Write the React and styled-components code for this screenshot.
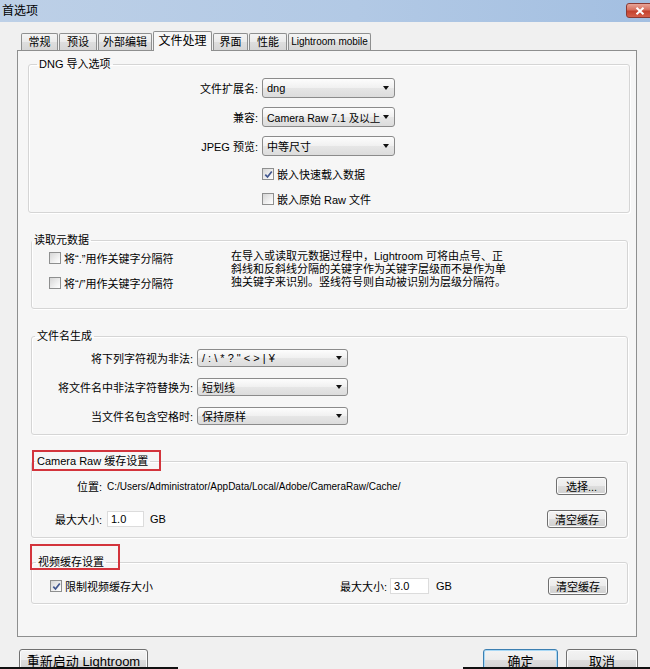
import styled, { createGlobalStyle } from 'styled-components';

const GlobalStyle = createGlobalStyle`
  html, body {
    margin: 0;
    padding: 0;
    background: #f0f0f0;
  }
  body {
    font-family: "Liberation Sans", "Noto Sans CJK SC", sans-serif;
    font-size: 11px;
    color: #000;
  }
  * {
    box-sizing: border-box;
  }
`;

const Window = styled.div`
  width: 650px;
  height: 669px;
  overflow: hidden;
  background: #f0f0f0;
  display: flex;
  flex-direction: column;
`;

const TitleBar = styled.div`
  flex: none;
  height: 22px;
  display: flex;
  align-items: flex-start;
  justify-content: space-between;
  padding-left: 2px;
  background: linear-gradient(to right, #bdd0e7 0%, #b2c9e5 55%, #a3bfe1 100%);
`;

const Title = styled.span`
  font-size: 12px;
  line-height: 22px;
`;

const CloseButton = styled.div`
  margin-top: 3px;
  margin-right: -4px;
  width: 28px;
  height: 15px;
  border: 1px solid #8a3a33;
  border-radius: 3px;
  background: linear-gradient(#e8a497 0%, #d6705f 45%, #c3412d 55%, #d45f4a 100%);
  display: flex;
  align-items: center;
  justify-content: center;
`;

const Body = styled.div`
  padding: 9px 13px 0 17px;
`;

const TabRow = styled.div`
  position: relative;
  z-index: 1;
  height: 20px;
  margin-bottom: -1px;
  padding-left: 4px;
  display: flex;
  align-items: flex-start;
  gap: 1px;
`;

const Tab = styled.div`
  width: ${p => p.$w}px;
  height: ${p => (p.$active ? 20 : 17)}px;
  margin-top: ${p => (p.$active ? 0 : 2)}px;
  border: 1px solid #8e8f8f;
  border-bottom: none;
  border-radius: 2px 2px 0 0;
  background: ${p =>
    p.$active ? '#f6f6f6' : 'linear-gradient(#f4f4f4 0%, #eaeaea 50%, #dedede 51%, #d6d6d6 100%)'};
  font-size: ${p => (p.$active ? 12 : p.$small ? 10 : 11)}px;
  line-height: ${p => (p.$active ? 18 : 16)}px;
  text-align: center;
  white-space: nowrap;
  overflow: hidden;
`;

const Panel = styled.div`
  height: 587px;
  border: 1px solid #8e8f8f;
  background: #f6f6f6;
  display: flex;
  flex-direction: column;
`;

const Group = styled.fieldset`
  min-width: 0;
  margin: ${p => p.$top}px ${p => p.$right}px 0 ${p => p.$left}px;
  padding: ${p => p.$pad};
  border: 1px solid #d5d5d5;
  border-radius: 3px;
  box-shadow: inset 1px 1px 0 #ffffff, 1px 1px 0 #ffffff;
`;

const Legend = styled.legend`
  position: relative;
  margin-left: ${p => p.$indent}px;
  padding: 0 2px;
  font-size: 11px;
  line-height: 14px;

  ${p =>
    p.$mark &&
    `
    &::after {
      content: "";
      position: absolute;
      top: ${p.$mark[0]}px;
      right: ${p.$mark[1]}px;
      bottom: ${p.$mark[2]}px;
      left: ${p.$mark[3]}px;
      border: 2px solid #d3343c;
    }
  `}
`;

const FormGrid = styled.div`
  display: grid;
  grid-template-columns: ${p => p.$cols};
  column-gap: 4px;
  row-gap: ${p => p.$gap}px;
  align-items: center;
`;

const FieldLabel = styled.span`
  text-align: right;
  white-space: nowrap;
`;

const Combo = styled.div`
  height: ${p => p.$h}px;
  display: flex;
  align-items: center;
  justify-content: space-between;
  gap: 3px;
  padding: 0 5px 0 4px;
  border: 1px solid #8b8b8b;
  border-radius: 3px;
  background: linear-gradient(#fdfdfd 0%, #f0f0f0 50%, #e6e6e6 51%, #dcdcdc 100%);
  white-space: nowrap;
  overflow: hidden;
  font-size: ${p => (p.$tight ? 10.5 : 11)}px;
`;

const Arrow = styled.span`
  flex: none;
  width: 0;
  height: 0;
  border-left: 3.5px solid transparent;
  border-right: 3.5px solid transparent;
  border-top: 4px solid #111;
`;

const CheckLabel = styled.label`
  display: flex;
  align-items: center;
  gap: 3px;
  height: 16px;
  white-space: nowrap;
  margin-top: ${p => p.$mt || 0}px;
`;

const CheckBox = styled.span`
  flex: none;
  width: 12px;
  height: 12px;
  border: 1px solid #8e8f8f;
  background: linear-gradient(135deg, #d6d6d6 0%, #f4f4f4 70%, #ffffff 100%);
  display: flex;
  align-items: center;
  justify-content: center;
`;

const MetaRow = styled.div`
  display: flex;
  padding-left: 17px;
`;

const CheckColumn = styled.div`
  width: 182px;
  display: flex;
  flex-direction: column;
  gap: 9px;
`;

const Note = styled.p`
  margin: 0;
  line-height: 13px;
  white-space: nowrap;
`;

const CacheGrid = styled.div`
  display: grid;
  grid-template-columns: 70px 1fr auto;
  column-gap: 5px;
  row-gap: 15px;
  align-items: center;
  padding-right: 20px;
`;

const Path = styled.span`
  font-size: 10px;
  white-space: nowrap;
`;

const SizeGroup = styled.div`
  display: flex;
  align-items: center;
  gap: ${p => p.$gap ?? 6}px;
`;

const TextBox = styled.div`
  width: ${p => p.$w}px;
  height: 16px;
  padding: 0 3px;
  background: #ffffff;
  border: 1px solid #dcdcdc;
  line-height: 14px;
`;

const Button = styled.div`
  width: ${p => p.$w}px;
  height: ${p => p.$h || 18}px;
  flex: none;
  display: flex;
  align-items: center;
  justify-content: center;
  border: 1px solid ${p => (p.$primary ? '#3c7fb1' : '#707070')};
  border-radius: 3px;
  background: linear-gradient(#f3f3f3 0%, #ececec 50%, #dddddd 51%, #d0d0d0 100%);
  box-shadow: inset 0 0 0 1px ${p => (p.$primary ? '#a8d8f5' : '#fbfbfb')};
  font-size: ${p => p.$size || 11}px;
  white-space: nowrap;
  justify-self: end;
`;

const VideoRow = styled.div`
  display: flex;
  align-items: center;
  padding: 0 19px 0 18px;
`;

const VideoCheck = styled.div`
  width: 290px;
`;

const Unit = styled.span`
  margin-left: 4px;
`;

const Footer = styled.div`
  flex: none;
  height: 18px;
  margin-top: 12px;
  overflow: hidden;
  display: flex;
  align-items: flex-start;
  padding: 0 12px 0 19px;
`;

const PushRight = styled.div`
  margin-left: auto;
  display: flex;
  gap: 8px;
`;

const BottomEdge = styled.div`
  flex: none;
  height: 2px;
  background: linear-gradient(to right, #111 0, #111 178px, transparent 178px, transparent 463px, #111 463px);
`;

const tabs = [
  { label: '常规', w: 37 },
  { label: '预设', w: 38 },
  { label: '外部编辑', w: 54 },
  { label: '文件处理', w: 59, active: true },
  { label: '界面', w: 35 },
  { label: '性能', w: 38 },
  { label: 'Lightroom mobile', w: 83, small: true },
];

function Check({ checked, mt, children }) {
  return (
    <CheckLabel $mt={mt}>
      <CheckBox>
        {checked && (
          <svg width="9" height="9" viewBox="0 0 9 9">
            <path d="M1.3 4.6 L3.5 7 L7.8 1.4" fill="none" stroke="#41578f" strokeWidth="1.7" />
          </svg>
        )}
      </CheckBox>
      {children}
    </CheckLabel>
  );
}

function Select({ value, h, tight }) {
  return (
    <Combo $h={h} $tight={tight}>
      <span>{value}</span>
      <Arrow />
    </Combo>
  );
}

export default function App() {
  return (
    <Window>
      <GlobalStyle />
      <TitleBar>
        <Title>首选项</Title>
        <CloseButton>
          <svg width="10" height="8" viewBox="0 0 10 8">
            <path d="M1.5 0.8 L8.5 7.2 M8.5 0.8 L1.5 7.2" stroke="#fff" strokeWidth="2" />
          </svg>
        </CloseButton>
      </TitleBar>

      <Body>
        <TabRow>
          {tabs.map(t => (
            <Tab key={t.label} $w={t.w} $active={t.active} $small={t.small}>
              {t.label}
            </Tab>
          ))}
        </TabRow>

        <Panel>
          <Group $top={6} $left={10} $right={6} $pad="7px 0 5px 0">
            <Legend $indent={8}>DNG 导入选项</Legend>
            <FormGrid $cols="229px 133px" $gap={9}>
              <FieldLabel>文件扩展名:</FieldLabel>
              <Select value="dng" h={20} />
              <FieldLabel>兼容:</FieldLabel>
              <Select value="Camera Raw 7.1 及以上" h={20} tight />
              <FieldLabel>JPEG 预览:</FieldLabel>
              <Select value="中等尺寸" h={20} />
              <span />
              <Check checked mt={1}>嵌入快速载入数据</Check>
              <span />
              <Check>嵌入原始 Raw 文件</Check>
            </FormGrid>
          </Group>

          <Group $top={20} $left={13} $right={8} $pad="3px 0 17px 0">
            <Legend $indent={0}>读取元数据</Legend>
            <MetaRow>
              <CheckColumn>
                <Check>将“.”用作关键字分隔符</Check>
                <Check>将“/”用作关键字分隔符</Check>
              </CheckColumn>
              <Note>
                在导入或读取元数据过程中，Lightroom 可将由点号、正
                <br />
                斜线和反斜线分隔的关键字作为关键字层级而不是作为单
                <br />
                独关键字来识别。竖线符号则自动被识别为层级分隔符。
              </Note>
            </MetaRow>
          </Group>

          <Group $top={20} $left={13} $right={8} $pad="6px 0 9px 0">
            <Legend $indent={3}>文件名生成</Legend>
            <FormGrid $cols="161px 151px" $gap={11}>
              <FieldLabel>将下列字符视为非法:</FieldLabel>
              <Select value={'/ : \\ * ? " < > | ¥'} h={18} />
              <FieldLabel>将文件名中非法字符替换为:</FieldLabel>
              <Select value="短划线" h={18} />
              <FieldLabel>当文件名包含空格时:</FieldLabel>
              <Select value="保持原样" h={18} />
            </FormGrid>
          </Group>

          <Group $top={19} $left={13} $right={8} $pad="9px 0 9px 0">
            <Legend $indent={3} $mark={[-4, -11, -3, -3]}>Camera Raw 缓存设置</Legend>
            <CacheGrid>
              <FieldLabel>位置:</FieldLabel>
              <Path>C:/Users/Administrator/AppData/Local/Adobe/CameraRaw/Cache/</Path>
              <Button $w={51}>选择...</Button>
              <FieldLabel>最大大小:</FieldLabel>
              <SizeGroup>
                <TextBox $w={37}>1.0</TextBox>
                GB
              </SizeGroup>
              <Button $w={60}>清空缓存</Button>
            </CacheGrid>
          </Group>

          <Group $top={17} $left={13} $right={8} $pad="8px 0 8px 0">
            <Legend $indent={4} $mark={[-11, -14, -1, -6]}>视频缓存设置</Legend>
            <VideoRow>
              <VideoCheck>
                <Check checked>限制视频缓存大小</Check>
              </VideoCheck>
              <SizeGroup $gap={3}>
                最大大小:
                <TextBox $w={39}>3.0</TextBox>
                <Unit>GB</Unit>
              </SizeGroup>
              <PushRight>
                <Button $w={60}>清空缓存</Button>
              </PushRight>
            </VideoRow>
          </Group>
        </Panel>
      </Body>

      <Footer>
        <Button $w={129} $h={22} $size={13}>重新启动 Lightroom</Button>
        <PushRight>
          <Button $w={75} $h={22} $size={13} $primary>确定</Button>
          <Button $w={72} $h={22} $size={13}>取消</Button>
        </PushRight>
      </Footer>
      <BottomEdge />
    </Window>
  );
}
